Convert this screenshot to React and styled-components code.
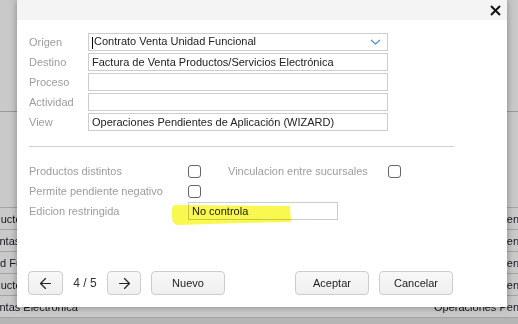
import React from 'react'
import styled, { createGlobalStyle } from 'styled-components'
import { ArrowLeft, ArrowRight } from 'lucide-react'

const GlobalStyle = createGlobalStyle`
  body {
    margin: 0;
    font-family: 'Liberation Sans', Arial, sans-serif;
  }
`

const Screen = styled.div`
  position: relative;
  width: 518px;
  height: 324px;
  overflow: hidden;
  background: #fff;
`

const Page = styled.div`
  display: flex;
  flex-direction: column;
  height: 100%;
  font-size: 11px;
  color: #1c1c2a;
`

const TopBar = styled.div`
  flex: 0 0 112px;
  box-sizing: border-box;
  border-bottom: 1px solid #c4c4c4;
`

const Gap = styled.div`
  flex: 0 0 96px;
  box-sizing: border-box;
  border-bottom: 1px solid #cfcfcf;
`

const Row = styled.div`
  flex: 0 0 22px;
  box-sizing: border-box;
  display: grid;
  grid-template-columns: 503px 1fr;
  align-items: center;
  margin-left: -69px;
  border-bottom: 1px solid #cfcfcf;
  white-space: nowrap;
  overflow: hidden;
`

const Cell = styled.div`
  overflow: hidden;
`

const PageFoot = styled.div`
  flex: 1;
  background: #e6e6e6;
`

const Overlay = styled.div`
  position: absolute;
  inset: 0;
  background: rgba(0, 0, 0, 0.21);
`

const Dialog = styled.div`
  position: absolute;
  left: 17px;
  top: 0;
  width: 490px;
  height: 307px;
  background: #fff;
  box-shadow: 0 0 7px rgba(0, 0, 0, 0.35);
  display: flex;
  flex-direction: column;
  font-size: 11px;
`

const Header = styled.div`
  height: 20px;
  background: #f4f4f4;
  display: flex;
  justify-content: flex-end;
  align-items: center;
  padding-right: 6px;
`

const Body = styled.div`
  padding: 13px 0 0 12px;
`

const Form = styled.div`
  display: grid;
  grid-template-columns: 59px 300px;
  row-gap: 2px;
  align-items: center;
`

const Label = styled.span`
  color: #9d9d9d;
  white-space: nowrap;
`

const Field = styled.div`
  box-sizing: border-box;
  height: 18px;
  width: ${p => p.$w || 300}px;
  border: 1px solid #cdcdcd;
  padding: 0 6px 0 3px;
  display: flex;
  align-items: center;
  justify-content: space-between;
  color: #222;
  white-space: nowrap;
`

const Caret = styled.span`
  display: inline-block;
  width: 1px;
  height: 12px;
  background: #000;
  margin-right: 1px;
  vertical-align: middle;
`

const Separator = styled.div`
  width: 425px;
  height: 1px;
  background: #d0d0d0;
  margin-top: 15px;
`

const Options = styled.div`
  display: grid;
  grid-template-columns: 159px 40px 160px 13px;
  grid-auto-rows: 20px;
  align-items: center;
  margin-top: 14px;
`

const Check = styled.span`
  box-sizing: border-box;
  width: 13px;
  height: 13px;
  border: 1px solid #666;
  border-radius: 3px;
`

const Wide = styled.div`
  grid-column: 2 / 4;
  align-self: start;
  padding-top: 1px;
`

const Footer = styled.div`
  margin-top: auto;
  padding: 0 54px 12px 11px;
  display: flex;
  align-items: center;
`

const Group = styled.div`
  display: flex;
  align-items: center;
  gap: 10px;
  margin-right: auto;
`

const Button = styled.button`
  box-sizing: border-box;
  width: ${p => p.$w || 74}px;
  height: 24px;
  margin-left: ${p => p.$ml || 0}px;
  border: 1px solid #cdcdcd;
  border-radius: 4px;
  background: linear-gradient(#f8f8f8, #efefef);
  font-family: inherit;
  font-size: 11px;
  color: #222;
  display: flex;
  align-items: center;
  justify-content: center;
  padding: 0;
`

const Pager = styled.span`
  font-size: 12px;
  color: #333;
  width: 24px;
  text-align: center;
`

const Highlight = styled.svg`
  position: absolute;
  left: 154px;
  top: 204px;
  mix-blend-mode: multiply;
`

const rows = [
  'Venta de Productos',
  'Factura de Ventas',
  'Venta a Unidad Funcional',
  'Venta de Productos',
  'Factura de Ventas Electronica',
]

export default function App() {
  return (
    <>
      <GlobalStyle />
      <Screen>
        <Page>
          <TopBar />
          <Gap />
          {rows.map((r, i) => (
            <Row key={i}>
              <Cell>{r}</Cell>
              <Cell>Operaciones Pendientes</Cell>
            </Row>
          ))}
          <PageFoot />
        </Page>
        <Overlay />
        <Dialog>
          <Header>
            <svg width="11" height="11" viewBox="0 0 11 11">
              <path d="M1 1 L10 10 M10 1 L1 10" stroke="#111" strokeWidth="2" />
            </svg>
          </Header>
          <Body>
            <Form>
              <Label>Origen</Label>
              <Field>
                <span><Caret />Contrato Venta Unidad Funcional</span>
                <svg width="11" height="6" viewBox="0 0 11 6">
                  <path d="M1 1 L5.5 5 L10 1" fill="none" stroke="#4a8fd6" strokeWidth="1.2" />
                </svg>
              </Field>
              <Label>Destino</Label>
              <Field>Factura de Venta Productos/Servicios Electrónica</Field>
              <Label>Proceso</Label>
              <Field />
              <Label>Actividad</Label>
              <Field />
              <Label>View</Label>
              <Field>Operaciones Pendientes de Aplicación (WIZARD)</Field>
            </Form>
            <Separator />
            <Options>
              <Label>Productos distintos</Label>
              <Check />
              <Label>Vinculacion entre sucursales</Label>
              <Check />
              <Label>Permite pendiente negativo</Label>
              <Check />
              <span />
              <span />
              <Label>Edicion restringida</Label>
              <Wide>
                <Field $w={150}>No controla</Field>
              </Wide>
            </Options>
          </Body>
          <Footer>
            <Group>
              <Button $w={35}><ArrowLeft size={17} strokeWidth={1.7} color="#222" /></Button>
              <Pager>4 / 5</Pager>
              <Button $w={34}><ArrowRight size={17} strokeWidth={1.7} color="#222" /></Button>
              <Button>Nuevo</Button>
            </Group>
            <Button>Aceptar</Button>
            <Button $ml={10}>Cancelar</Button>
          </Footer>
          <Highlight width="122" height="23" viewBox="0 0 122 23">
            <path d="M5 1 L119 2 L120 18 L70 19 L8 21 Q1 21 1 13 L1 6 Q1 1 5 1 Z" fill="#f8f850" />
          </Highlight>
        </Dialog>
      </Screen>
    </>
  )
}
